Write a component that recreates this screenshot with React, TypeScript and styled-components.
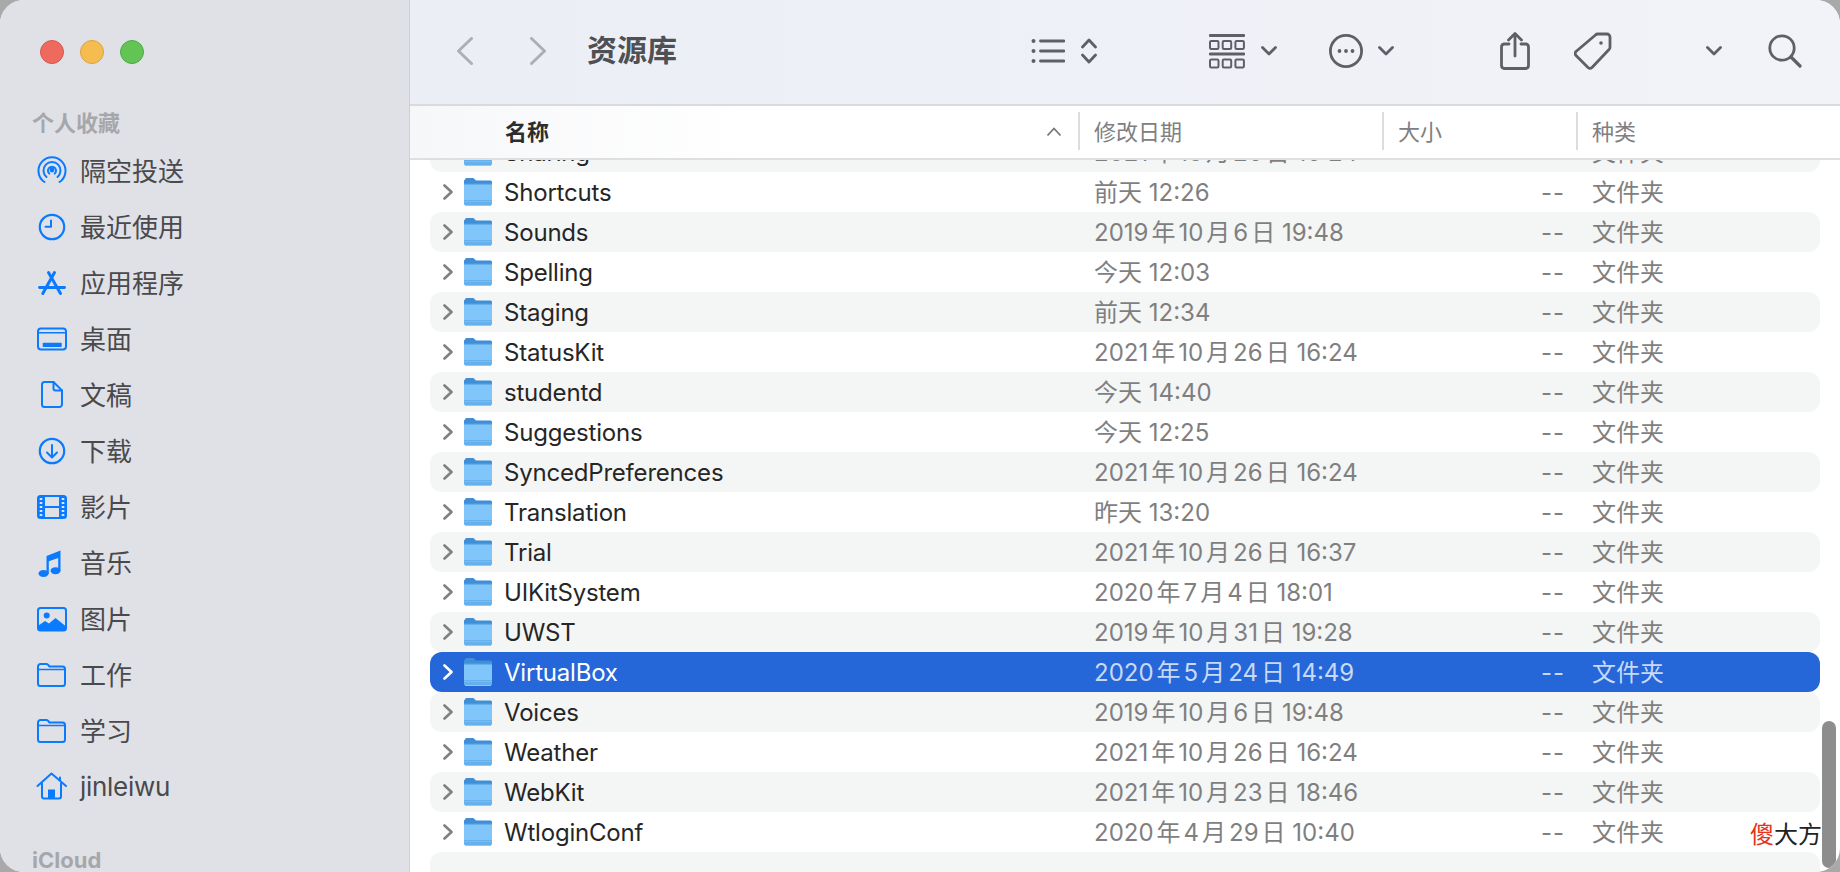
import React from 'react'
import styled, { createGlobalStyle } from 'styled-components'

const GlobalStyle = createGlobalStyle`
  html, body, #root {
    margin: 0;
    height: 100%;
    overflow: hidden;
    background: #a9a9ab;
  }
  * { box-sizing: border-box; }
`

const FONT = `Inter, "Noto Sans CJK SC", sans-serif`
const BLUE = '#0a7aff'
const TOOL = '#5f6065'

const Window = styled.main`
  display: flex;
  width: 1840px;
  height: 872px;
  border-radius: 24px;
  overflow: hidden;
  position: relative;
  font-family: ${FONT};
  background: #fff;
`

const Sidebar = styled.aside`
  flex: none;
  width: 410px;
  height: 100%;
  padding-top: 40px;
  background: #e0e1e6;
  border-right: 1px solid #cfd0d4;
  overflow: hidden;
`

const Lights = styled.div`
  display: flex;
  gap: 16px;
  padding-left: 40px;
`

const Light = styled.span<{ $fill: string; $edge: string }>`
  width: 24px;
  height: 24px;
  border-radius: 50%;
  background: ${p => p.$fill};
  border: 1px solid ${p => p.$edge};
`

const SectionTitle = styled.div<{ $top: number; $shift?: number }>`
  margin-top: ${p => p.$top}px;
  padding-left: 32px;
  height: 30px;
  line-height: ${p => 30 - (p.$shift ?? 0)}px;
  font-size: 22px;
  font-weight: 700;
  color: #a6a7ab;
`

const SideList = styled.nav`
  margin-top: 4px;
`

const SideItem = styled.div`
  display: flex;
  align-items: center;
  gap: 12px;
  height: 56px;
  padding-left: 36px;
  font-size: 26px;
  color: #4a4a4d;
`

const SideLabel = styled.span<{ $latin?: boolean }>`
  padding-bottom: ${p => (p.$latin ? 2 : 4)}px;
  letter-spacing: ${p => (p.$latin ? '-0.3px' : '0')};
`

const SideSvg = styled.svg`
  flex: none;
  width: 32px;
  height: 32px;
  fill: none;
  stroke: ${BLUE};
  stroke-width: 2;
  stroke-linecap: round;
  stroke-linejoin: round;
`

const Pane = styled.section`
  flex: 1;
  min-width: 0;
  display: flex;
  flex-direction: column;
`

const Toolbar = styled.header`
  flex: none;
  display: flex;
  align-items: center;
  height: 106px;
  padding: 0 38px 2px 47px;
  background: linear-gradient(90deg, #eceef6 0, #eef0f7 40%, #f2f3f8 100%);
  border-bottom: 2px solid #d9dadd;
`

const NavIcon = styled.svg<{ $left?: number }>`
  flex: none;
  width: 16px;
  height: 28px;
  margin-left: ${p => p.$left ?? 0}px;
  fill: none;
  stroke: #aeafb4;
  stroke-width: 3;
  stroke-linecap: round;
  stroke-linejoin: round;
`

const Title = styled.h1`
  margin: 0 0 2px 41px;
  font-size: 30px;
  font-weight: 700;
  color: #4f5054;
  line-height: 40px;
`

const Spacer = styled.div`
  flex: 1;
`

const ToolGroup = styled.div<{ $left?: number; $gap?: number }>`
  flex: none;
  display: flex;
  align-items: center;
  gap: ${p => p.$gap ?? 16}px;
  margin-left: ${p => p.$left ?? 0}px;
`

const ToolSvg = styled.svg`
  flex: none;
  display: block;
  fill: none;
  stroke: ${TOOL};
  stroke-width: 2.8;
  stroke-linecap: round;
  stroke-linejoin: round;
`

const ColumnHeader = styled.div`
  flex: none;
  display: grid;
  grid-template-columns: 648px 304px 194px 1fr;
  height: 54px;
  padding: 0 0 0 20px;
  background: linear-gradient(90deg, #f6f7f9 0, #fff 340px);
  border-bottom: 2px solid #dedfe1;
  position: relative;
  z-index: 1;
`

const HeadCell = styled.div<{ $bold?: boolean; $sep?: boolean }>`
  display: flex;
  align-items: center;
  justify-content: space-between;
  height: 38px;
  margin-top: 6px;
  padding: ${p => (p.$bold ? '0 16px 3px 75px' : '0 0 3px 14px')};
  border-left: ${p => (p.$sep ? '2px solid #dcdcde' : 'none')};
  font-size: 22px;
  font-weight: ${p => (p.$bold ? 700 : 400)};
  color: ${p => (p.$bold ? '#2d2d2d' : '#808082')};
`

const SortCaret = styled.svg`
  width: 16px;
  height: 10px;
  margin-top: 4px;
  fill: none;
  stroke: #77777a;
  stroke-width: 1.8;
`

const ListClip = styled.div`
  flex: 1;
  min-height: 0;
  overflow: hidden;
`

const ListInner = styled.div`
  margin-top: -28px;
  padding: 0 20px;
`

const Row = styled.div<{ $alt?: boolean; $selected?: boolean }>`
  display: grid;
  grid-template-columns: 664px 304px 167px 1fr;
  align-items: center;
  height: 40px;
  border-radius: 12px;
  font-size: 24px;
  background: ${p => (p.$selected ? '#2566d9' : p.$alt ? '#f4f5f5' : 'transparent')};
  color: ${p => (p.$selected ? '#c9d9f6' : '#7f7f7f')};
`

const NameCell = styled.div<{ $selected?: boolean }>`
  display: flex;
  align-items: center;
  padding-left: 13px;
  letter-spacing: -0.2px;
  color: ${p => (p.$selected ? '#fff' : '#262626')};
`

const Disclosure = styled.svg<{ $selected?: boolean }>`
  flex: none;
  width: 10px;
  height: 16px;
  margin-right: 11px;
  fill: none;
  stroke: ${p => (p.$selected ? '#fff' : '#808080')};
  stroke-width: 2.6;
  stroke-linecap: round;
  stroke-linejoin: round;
`

const FolderSvg = styled.svg`
  flex: none;
  width: 28px;
  height: 28px;
  margin-right: 12px;
`

const DateCell = styled.div`
  padding-bottom: 3px;
  white-space: pre;
`

const DateUnit = styled.span<{ $last?: boolean }>`
  margin: 0 ${p => (p.$last ? 0 : 3)}px 0 3px;
`

const SizeCell = styled.div`
  text-align: right;
  letter-spacing: 1px;
`

const KindCell = styled.div`
  padding: 0 0 3px 27px;
`

const ScrollThumb = styled.div`
  position: absolute;
  right: 4px;
  bottom: 4px;
  width: 14px;
  height: 147px;
  border-radius: 7px;
  background: #8d8d8d;
  z-index: 2;
`

const Watermark = styled.div`
  position: absolute;
  right: 18px;
  bottom: 21px;
  font-size: 24px;
  line-height: 32px;
  color: #222;
  z-index: 3;

  & em {
    font-style: normal;
    color: #e8321a;
  }
`

const AirDropIcon = () => (
  <SideSvg viewBox="0 0 32 32">
    <path d="M8.5 27A13.5 13.5 0 1 1 23.5 27" />
    <path d="M10.5 22A8.5 8.5 0 1 1 21.5 22" />
    <path d="M13.3 18.6A4 4 0 1 1 18.7 18.6" />
    <circle cx="16" cy="15" r="1.4" fill={BLUE} />
  </SideSvg>
)

const ClockIcon = () => (
  <SideSvg viewBox="0 0 32 32">
    <circle cx="16" cy="16" r="12.2" strokeWidth="2.2" />
    <path d="M15 9.5V15.8H9.5" />
  </SideSvg>
)

const AppsIcon = () => (
  <SideSvg viewBox="0 0 32 32">
    <path d="M12.5 5.5L24.5 26.5" strokeWidth="3" />
    <path d="M18.5 5.5L6.8 26.5" strokeWidth="3" />
    <path d="M3.5 20.5H28.5" strokeWidth="2.8" />
  </SideSvg>
)

const DesktopIcon = () => (
  <SideSvg viewBox="0 0 32 32">
    <rect x="2" y="5.5" width="28" height="21" rx="3" />
    <path d="M2 9.8H30" strokeWidth="1.5" />
    <rect x="6.7" y="19.8" width="19" height="4.2" rx="0.8" fill={BLUE} stroke="none" />
  </SideSvg>
)

const DocIcon = () => (
  <SideSvg viewBox="0 0 32 32">
    <path d="M8.5 3H17.5L26 11.5V25.5a2.5 2.5 0 0 1-2.5 2.5H8.5a2.5 2.5 0 0 1-2.5-2.5V5.5a2.5 2.5 0 0 1 2.5-2.5Z" />
    <path d="M17.5 3V9.5a2 2 0 0 0 2 2H26" />
  </SideSvg>
)

const DownloadIcon = () => (
  <SideSvg viewBox="0 0 32 32">
    <circle cx="16" cy="16" r="12.2" strokeWidth="2.2" />
    <path d="M16 10V22M11 17.5L16 22.5L21 17.5" />
  </SideSvg>
)

const FilmIcon = () => (
  <SideSvg viewBox="0 0 32 32">
    <rect x="2" y="5" width="28" height="22" rx="2.5" />
    <path d="M8 5V27M24 5V27M8 16H24" />
    <path d="M2 5H8V27H2ZM24 5H30V27H24Z" fill={BLUE} stroke="none" />
    {[8, 12, 16, 20, 24].map(y => (
      <g key={y} fill="#dfe3ee" stroke="none">
        <rect x="3.7" y={y - 1} width="2.6" height="2" />
        <rect x="25.7" y={y - 1} width="2.6" height="2" />
      </g>
    ))}
  </SideSvg>
)

const MusicIcon = () => (
  <SideSvg viewBox="0 0 32 32" style={{ stroke: 'none', fill: BLUE }}>
    <path d="M10.5 9L24.5 3.5V24H22.2V11L12.8 14.2V27H10.5Z" />
    <ellipse cx="7.5" cy="26.5" rx="5" ry="3.5" />
    <ellipse cx="19.5" cy="23.8" rx="5" ry="3.5" />
  </SideSvg>
)

const PhotoIcon = () => (
  <SideSvg viewBox="0 0 32 32">
    <rect x="2" y="5" width="28" height="22.5" rx="2.5" />
    <circle cx="10.7" cy="12.5" r="3" fill={BLUE} stroke="none" />
    <path d="M2.5 22.5L9 18L13 20.5L19.5 15L29.5 23V26A1.5 1.5 0 0 1 28 27.5H4A1.5 1.5 0 0 1 2.5 26Z" fill={BLUE} stroke="none" />
  </SideSvg>
)

const FolderIcon = () => (
  <SideSvg viewBox="0 0 32 32">
    <path d="M4.5 5H10.5a2 2 0 0 1 1.4.6L13.5 7.5H26.5A2.5 2.5 0 0 1 29 10V24.5A2.5 2.5 0 0 1 26.5 27H4.5A2.5 2.5 0 0 1 2 24.5V7.5A2.5 2.5 0 0 1 4.5 5Z" />
    <path d="M2 10.5H29" strokeWidth="1.6" />
  </SideSvg>
)

const HomeIcon = () => (
  <SideSvg viewBox="0 0 32 32">
    <path d="M1.5 15L15.5 2.5L30 15M24 6.5V9.5" />
    <path d="M6 12.5V25.5a2 2 0 0 0 2 2H23a2 2 0 0 0 2-2V12.5" />
    <rect x="12" y="18.5" width="7" height="9" fill={BLUE} stroke="none" />
  </SideSvg>
)

const favourites = [
  { label: '隔空投送', icon: <AirDropIcon /> },
  { label: '最近使用', icon: <ClockIcon /> },
  { label: '应用程序', icon: <AppsIcon /> },
  { label: '桌面', icon: <DesktopIcon /> },
  { label: '文稿', icon: <DocIcon /> },
  { label: '下载', icon: <DownloadIcon /> },
  { label: '影片', icon: <FilmIcon /> },
  { label: '音乐', icon: <MusicIcon /> },
  { label: '图片', icon: <PhotoIcon /> },
  { label: '工作', icon: <FolderIcon /> },
  { label: '学习', icon: <FolderIcon /> },
  { label: 'jinleiwu', icon: <HomeIcon />, latin: true },
]

const files = [
  ['Sharing', '2021年10月26日 16:24'],
  ['Shortcuts', '前天 12:26'],
  ['Sounds', '2019年10月6日 19:48'],
  ['Spelling', '今天 12:03'],
  ['Staging', '前天 12:34'],
  ['StatusKit', '2021年10月26日 16:24'],
  ['studentd', '今天 14:40'],
  ['Suggestions', '今天 12:25'],
  ['SyncedPreferences', '2021年10月26日 16:24'],
  ['Translation', '昨天 13:20'],
  ['Trial', '2021年10月26日 16:37'],
  ['UIKitSystem', '2020年7月4日 18:01'],
  ['UWST', '2019年10月31日 19:28'],
  ['VirtualBox', '2020年5月24日 14:49'],
  ['Voices', '2019年10月6日 19:48'],
  ['Weather', '2021年10月26日 16:24'],
  ['WebKit', '2021年10月23日 18:46'],
  ['WtloginConf', '2020年4月29日 10:40'],
]

const RowFolder = () => (
  <FolderSvg viewBox="0 0 28 28">
    <path d="M1 1.5A1.5 1.5 0 0 1 2.5 0H9.5L12 2.5H26.5A1.5 1.5 0 0 1 28 4V8H0V2.5Z" fill="#3f8fd6" />
    <path d="M0 5H28V25.5A1.5 1.5 0 0 1 26.5 27H1.5A1.5 1.5 0 0 1 0 25.5Z" fill="#80c6fa" />
    <path d="M0 5H28V6.5H0Z" fill="#4a98dc" />
    <path d="M0 22H28V25.5A1.5 1.5 0 0 1 26.5 27H1.5A1.5 1.5 0 0 1 0 25.5Z" fill="#66b0ec" />
    <path d="M0 23.5H28V24H0Z" fill="#8cc8f5" />
    <path d="M1 27H27V28H1Z" fill="#b9bcc0" />
  </FolderSvg>
)

// macOS puts a small gap between the digits and the 年月日 units
const formatDate = (date: string) =>
  date.split(/([年月日])/).map((part, i) =>
    i % 2 === 1 ? <DateUnit key={i} $last={part === '日'}>{part}</DateUnit> : part
  )

const FileRow = ({ name, date, index }: { name: string; date: string; index: number }) => {
  const selected = name === 'VirtualBox'
  return (
    <Row $alt={index % 2 === 0} $selected={selected}>
      <NameCell $selected={selected}>
        <Disclosure viewBox="0 0 10 16" $selected={selected}>
          <path d="M1.5 1.5L8.5 8L1.5 14.5" />
        </Disclosure>
        <RowFolder />
        {name}
      </NameCell>
      <DateCell>{formatDate(date)}</DateCell>
      <SizeCell>--</SizeCell>
      <KindCell>文件夹</KindCell>
    </Row>
  )
}

const ChevronDown = () => (
  <ToolSvg width="16" height="10" viewBox="0 0 16 10">
    <path d="M1.5 1.5L8 8L14.5 1.5" />
  </ToolSvg>
)

const App = () => (
  <Window>
    <GlobalStyle />
    <Sidebar>
      <Lights>
        <Light $fill="#ee6a5f" $edge="#d9574d" />
        <Light $fill="#f5bd4f" $edge="#dea33c" />
        <Light $fill="#61c454" $edge="#50ab44" />
      </Lights>
      <SectionTitle $top={45} $shift={2}>个人收藏</SectionTitle>
      <SideList>
        {favourites.map(item => (
          <SideItem key={item.label}>
            {item.icon}
            <SideLabel $latin={item.latin}>{item.label}</SideLabel>
          </SideItem>
        ))}
      </SideList>
      <SectionTitle $top={30}>iCloud</SectionTitle>
    </Sidebar>
    <Pane>
      <Toolbar>
        <NavIcon viewBox="0 0 16 28">
          <path d="M14.5 1.5L1.5 14L14.5 26.5" />
        </NavIcon>
        <NavIcon viewBox="0 0 16 28" $left={57}>
          <path d="M1.5 1.5L14.5 14L1.5 26.5" />
        </NavIcon>
        <Title>资源库</Title>
        <Spacer />
        <ToolGroup>
          <ToolSvg width="34" height="26" viewBox="0 0 34 26">
            <path d="M9.5 3H33M9.5 13H33M9.5 23H33" />
            <g fill={TOOL} stroke="none">
              <circle cx="2.5" cy="3" r="2" />
              <circle cx="2.5" cy="13" r="2" />
              <circle cx="2.5" cy="23" r="2" />
            </g>
          </ToolSvg>
          <ToolSvg width="16" height="26" viewBox="0 0 16 26">
            <path d="M1.5 9L8 2L14.5 9M1.5 17L8 24L14.5 17" />
          </ToolSvg>
        </ToolGroup>
        <ToolGroup $left={112}>
          <ToolSvg width="36" height="35" viewBox="0 0 36 35">
            <path d="M1 1.5H35M1 20H35" />
            <g strokeWidth="2">
              <rect x="1" y="7" width="8.5" height="8" rx="1.2" />
              <rect x="13.7" y="7" width="8.5" height="8" rx="1.2" />
              <rect x="26.4" y="7" width="8.5" height="8" rx="1.2" />
              <rect x="1" y="25.5" width="8.5" height="8" rx="1.2" />
              <rect x="13.7" y="25.5" width="8.5" height="8" rx="1.2" />
              <rect x="26.4" y="25.5" width="8.5" height="8" rx="1.2" />
            </g>
          </ToolSvg>
          <ChevronDown />
        </ToolGroup>
        <ToolGroup $left={52} $gap={15}>
          <ToolSvg width="34" height="34" viewBox="0 0 34 34">
            <circle cx="17" cy="17" r="15.6" />
            <g fill={TOOL} stroke="none">
              <circle cx="10.5" cy="17" r="1.9" />
              <circle cx="17" cy="17" r="1.9" />
              <circle cx="23.5" cy="17" r="1.9" />
            </g>
          </ToolSvg>
          <ChevronDown />
        </ToolGroup>
        <ToolGroup $left={106}>
          <ToolSvg width="30" height="38" viewBox="0 0 30 38">
            <path d="M9 12H4A3 3 0 0 0 1.5 15V33.5A3 3 0 0 0 4 36.5H26A3 3 0 0 0 28.5 33.5V15A3 3 0 0 0 26 12H21" />
            <path d="M15 24V2M8.5 8L15 1.5L21.5 8" />
          </ToolSvg>
        </ToolGroup>
        <ToolGroup $left={44}>
          <ToolSvg width="38" height="38" viewBox="0 0 38 38">
            <path d="M24 2H33A3 3 0 0 1 36 5V15A3 3 0 0 1 35 17.5L18 35.5A3 3 0 0 1 14 35.5L2 23.5A3 3 0 0 1 2 19.5L21.5 3A3 3 0 0 1 24 2Z" />
            <circle cx="27" cy="11" r="1.8" fill={TOOL} stroke="none" />
          </ToolSvg>
        </ToolGroup>
        <ToolGroup $left={94}>
          <ChevronDown />
        </ToolGroup>
        <ToolGroup $left={46}>
          <ToolSvg width="34" height="34" viewBox="0 0 34 34">
            <circle cx="14" cy="14" r="12.2" />
            <path d="M23 23L32 32" strokeWidth="3.2" />
          </ToolSvg>
        </ToolGroup>
      </Toolbar>
      <ColumnHeader>
        <HeadCell $bold>
          名称
          <SortCaret viewBox="0 0 16 10">
            <path d="M1.5 8.5L8 1.5L14.5 8.5" />
          </SortCaret>
        </HeadCell>
        <HeadCell $sep>修改日期</HeadCell>
        <HeadCell $sep>大小</HeadCell>
        <HeadCell $sep>种类</HeadCell>
      </ColumnHeader>
      <ListClip>
        <ListInner>
          {files.map(([name, date], index) => (
            <FileRow key={name} name={name} date={date} index={index} />
          ))}
          <Row $alt />
        </ListInner>
      </ListClip>
    </Pane>
    <ScrollThumb />
    <Watermark>
      <em>傻</em>大方
    </Watermark>
  </Window>
)

export default App
